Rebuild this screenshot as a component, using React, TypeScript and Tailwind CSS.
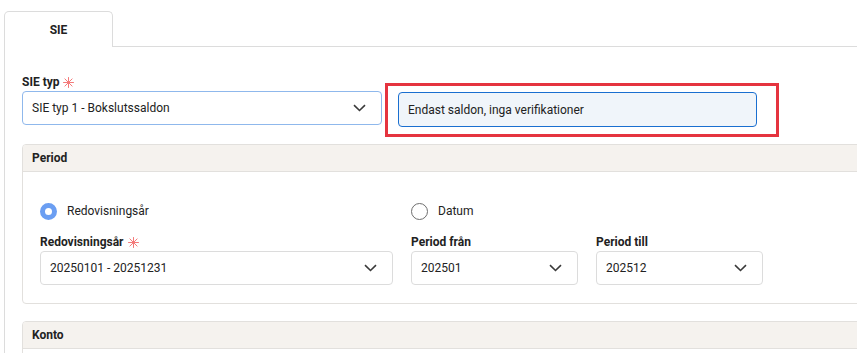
import React from "react";

const font = { fontFamily: "Roboto, 'Noto Sans', sans-serif" };

function Star() {
  return (
    <svg width="11" height="11" viewBox="0 0 11 11" className="ml-[4px] shrink-0">
      <g stroke="#f47a7a" strokeWidth="1" strokeLinecap="round">
        <line x1="5.5" y1="0.5" x2="5.5" y2="10.5" />
        <line x1="0.5" y1="5.5" x2="10.5" y2="5.5" />
        <line x1="1.9" y1="1.9" x2="9.1" y2="9.1" />
        <line x1="9.1" y1="1.9" x2="1.9" y2="9.1" />
      </g>
    </svg>
  );
}

function Chevron() {
  return (
    <svg width="13" height="8" viewBox="0 0 13 8" className="shrink-0">
      <path d="M1 1.2 L6.5 6.5 L12 1.2" fill="none" stroke="#3a3a3a" strokeWidth="1.6" />
    </svg>
  );
}

function Label({ text, required }: { text: string; required?: boolean }) {
  return (
    <div className="flex items-center h-[16px] text-[12px] font-bold text-[#222]">
      {text}
      {required && <Star />}
    </div>
  );
}

function Select({ value, w, border = "border-[#dcdcdc]" }: { value: string; w: string; border?: string }) {
  return (
    <div className={`${w} h-[34px] mt-[1px] flex items-center justify-between border ${border} rounded-[4px] pl-[9px] pr-[15px] text-[12px] text-[#222] bg-white`}>
      <span>{value}</span>
      <Chevron />
    </div>
  );
}

function Radio({ checked, label }: { checked?: boolean; label: string }) {
  return (
    <div className="flex items-center gap-[10px] h-[18px]">
      {checked ? (
        <span className="w-[17px] h-[17px] rounded-full border-[5px] border-[#6b9ef2] bg-white" />
      ) : (
        <span className="w-[17px] h-[17px] rounded-full border-[1.5px] border-[#6e6e6e] bg-white" />
      )}
      <span className="text-[12px] text-[#222]">{label}</span>
    </div>
  );
}

function SectionHeader({ title }: { title: string }) {
  return (
    <div className="h-[27px] bg-[#f5f2ee] border-b border-[#e2e0dd] flex items-center pl-[9px] text-[12px] font-bold text-[#222]">
      {title}
    </div>
  );
}

export default function App() {
  return (
    <div className="w-[857px] h-[353px] overflow-hidden bg-white pt-[11px] pl-[4px]" style={font}>
      <div className="flex">
        <div className="w-[109px] h-[36px] border border-b-0 border-[#dcdcdc] rounded-t-[5px] flex items-center justify-center text-[12px] font-bold text-[#222]">
          SIE
        </div>
        <div className="flex-1 border-b border-[#dcdcdc]" />
      </div>
      <div className="border-l border-[#dcdcdc] pl-[17px] pt-[27px] h-[400px]">
        <div className="flex items-start">
          <div>
            <Label text="SIE typ" required />
            <Select value="SIE typ 1 - Bokslutssaldon" w="w-[360px]" border="border-[#8fb8ec]" />
          </div>
          <div className="ml-[3px] mt-[9px] w-[394px] h-[54px] border-[3px] border-[#e5343f] pl-[10px] pt-[6px]">
            <div className="w-[359px] h-[35px] border border-[#1a6fd0] bg-[#f0f5fa] rounded-[4px] flex items-center pl-[9px] text-[12px] text-[#222]">
              Endast saldon, inga verifikationer
            </div>
          </div>
        </div>

        <div className="mt-[7px] w-[900px] border border-[#e2e0dd] rounded-[4px] overflow-hidden">
          <SectionHeader title="Period" />
          <div className="pl-[17px] pt-[30px] pb-[18px]">
            <div className="flex gap-[18px]">
              <div className="w-[353px]">
                <Radio checked label="Redovisningsår" />
              </div>
              <div className="w-[167px]">
                <Radio label="Datum" />
              </div>
            </div>
            <div className="flex gap-[18px] mt-[14px]">
              <div>
                <Label text="Redovisningsår" required />
                <Select value="20250101 - 20251231" w="w-[353px]" />
              </div>
              <div>
                <Label text="Period från" />
                <Select value="202501" w="w-[167px]" />
              </div>
              <div>
                <Label text="Period till" />
                <Select value="202512" w="w-[167px]" />
              </div>
            </div>
          </div>
        </div>

        <div className="mt-[17px] w-[900px] border border-[#e2e0dd] rounded-[4px] overflow-hidden">
          <SectionHeader title="Konto" />
          <div className="h-[40px]" />
        </div>
      </div>
    </div>
  );
}
